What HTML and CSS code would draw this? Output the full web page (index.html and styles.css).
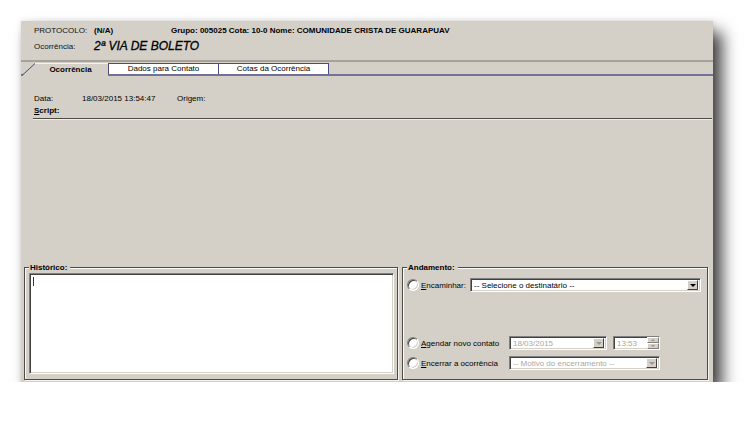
FILE: index.html
```html
<!DOCTYPE html>
<html lang="pt-BR">
<head>
  <meta charset="UTF-8">
  <title>Ocorrência</title>
  <link rel="stylesheet" href="styles.css">
</head>
<body>

<div class="window">

  <!-- cabeçalho -->
  <div class="header">
    <div class="hrow">
      <span class="hlabel">PROTOCOLO:</span>
      <span class="proto">(N/A)</span>
      <span class="grupo">Grupo: 005025 Cota: 10-0 Nome: COMUNIDADE CRISTA DE GUARAPUAV</span>
    </div>
    <div class="hrow hrow-title">
      <span class="hlabel">Ocorrência:</span>
      <span class="titulo">2ª VIA DE BOLETO</span>
    </div>
  </div>
  <div class="hsep"></div>

  <!-- abas -->
  <div class="tabs">
    <svg class="tab-slant" width="13" height="13" viewBox="0 0 13 13">
      <polygon points="0,13 13,0 13,13" fill="#d4d0c8"/>
      <line x1="0" y1="12.5" x2="13" y2="0.5" stroke="#4a4a80" stroke-width="1"/>
    </svg>
    <div class="tab tab-active">Ocorrência</div>
    <div class="tab tab-dados">Dados para Contato</div>
    <div class="tab tab-cotas">Cotas da Ocorrência</div>
  </div>

  <div class="content">
    <div class="info-row">
      <span class="info-label">Data:</span>
      <span class="info-date">18/03/2015 13:54:47</span>
      <span>Origem:</span>
    </div>
    <div class="script-row"><u>S</u>cript:</div>
    <div class="script-line"></div>
  </div>

  <div class="bottom">
    <fieldset class="group group-hist">
      <legend>Histórico:</legend>
      <div class="memo"><span class="caret"></span></div>
    </fieldset>

    <fieldset class="group group-and">
      <legend>Andamento:</legend>
      <div class="opt">
        <span class="radio"></span>
        <span class="opt-label opt-enc"><u>E</u>ncaminhar:</span>
        <div class="combo combo-dest">
          <span class="combo-val">-- Selecione o destinatário --</span>
          <span class="combo-btn"><i class="arrow"></i></span>
        </div>
      </div>
      <div class="opt opt-agendar">
        <span class="radio"></span>
        <span class="opt-label"><u>A</u>gendar novo contato</span>
        <div class="combo combo-date disabled">
          <span class="combo-val">18/03/2015</span>
          <span class="combo-btn"><i class="arrow"></i></span>
        </div>
        <div class="combo combo-time disabled">
          <span class="combo-val">13:53</span>
          <span class="spin">
            <span class="spin-btn"><i class="arrow-up"></i></span>
            <span class="spin-btn"><i class="arrow"></i></span>
          </span>
        </div>
      </div>
      <div class="opt">
        <span class="radio"></span>
        <span class="opt-label"><u>E</u>ncerrar a ocorrência</span>
        <div class="combo combo-motivo disabled">
          <span class="combo-val">-- Motivo do encerramento --</span>
          <span class="combo-btn"><i class="arrow"></i></span>
        </div>
      </div>
    </fieldset>
  </div>

</div>

</body>
</html>
```

FILE: styles.css
```css
body {
  margin: 0;
  background: #fff;
  font-family: "Liberation Sans", Arial, sans-serif;
  font-size: 8px;
  color: #000;
}

.window {
  width: 692px;
  height: 361px;
  margin: 21px 0 0 21px;
  background: #d4d0c8;
  box-shadow: 9px 11px 15px rgba(0, 0, 0, 0.75), 0 0 5px rgba(0, 0, 0, 0.12);
  display: flex;
  flex-direction: column;
}

/* cabeçalho */
.header {
  height: 39px;
  padding: 4px 0 0 13px;
  box-sizing: border-box;
}

.hrow {
  display: flex;
  align-items: center;
  height: 11px;
  white-space: nowrap;
}

.hrow-title {
  height: 16px;
  margin-top: 2px;
}

.hlabel {
  width: 60px;
  color: #111;
}

.proto {
  width: 77px;
  font-weight: bold;
}

.grupo {
  font-weight: bold;
}

.titulo {
  font-size: 12px;
  font-style: italic;
  -webkit-text-stroke: 0.3px #000;
}

.hsep {
  height: 2px;
  background: #a6a29a;
}

/* abas */
.tabs {
  display: flex;
  align-items: flex-end;
  height: 12px;
  padding-left: 1px;
  border-bottom: 2px solid #727199;
}

.tab-slant {
  display: block;
  margin-bottom: -2px;
}

.tab {
  height: 11px;
  line-height: 10px;
  box-sizing: border-box;
  text-align: center;
  background: #fff;
  border: 1px solid #4a4a80;
  border-bottom: none;
}

.tab-active {
  width: 73px;
  height: 13px;
  margin-bottom: -2px;
  line-height: 11px;
  font-weight: bold;
  background: #d4d0c8;
  border: none;
  border-top: 1px solid #f4f3f0;
  padding-right: 2px;
}

.tab-dados {
  width: 111px;
}

.tab-cotas {
  width: 111px;
  margin-left: -1px;
}

/* dados */
.content {
  padding: 18px 1px 0 12px;
}

.info-row {
  display: flex;
  height: 10px;
  line-height: 10px;
  padding-left: 1px;
}

.info-label {
  width: 48px;
}

.info-date {
  width: 95px;
}

.script-row {
  height: 10px;
  line-height: 10px;
  margin-top: 2px;
  padding-left: 1px;
  font-weight: bold;
}

.script-line {
  margin-top: 2px;
  border-top: 1px solid #4f4c47;
  border-bottom: 1px solid #efeeea;
}

/* grupos */
.bottom {
  display: flex;
  gap: 4px;
  margin-top: auto;
  height: 119px;
  padding: 0 5px 2px 3px;
  box-sizing: border-box;
}

.group {
  margin: 0;
  min-width: 0;
  height: 100%;
  box-sizing: border-box;
  border: 1px solid #4d4b47;
  box-shadow: inset 1px 1px 0 #fbfbfa, 1px 1px 0 #f4f3f0;
  display: flex;
  flex-direction: column;
}

.group legend {
  padding: 0 3px 0 1px;
  margin-left: 0;
  line-height: 9px;
  font-weight: bold;
  background: #d4d0c8;
}

.group-hist {
  flex: 0 0 374px;
  padding: 1px 3px 5px 4px;
}

.group-and {
  flex: 1;
  padding: 6px 6px 9px 4px;
}

.memo {
  flex: 1;
  background: #fff;
  border: 1px solid;
  border-color: #808080 #fff #fff #808080;
  box-shadow: inset 1px 1px 0 #404040, inset -1px -1px 0 #d4d0c8;
}

.caret {
  display: block;
  width: 1px;
  height: 9px;
  margin: 3px 0 0 3px;
  background: #333;
}

/* opções */
.opt {
  display: flex;
  align-items: center;
  height: 14px;
}

.opt-agendar {
  margin-top: auto;
  margin-bottom: 6px;
}

.radio {
  width: 12px;
  height: 12px;
  box-sizing: border-box;
  border-radius: 50%;
  background: #fff;
  border: 1px solid;
  border-color: #808080 #fff #fff #808080;
  box-shadow: inset 1px 1px 0 #404040, inset -1px -1px 0 #d4d0c8;
  margin-right: 2px;
}

.opt-label {
  width: 88px;
  white-space: nowrap;
}

.opt-enc {
  width: 49px;
}

.combo {
  display: flex;
  align-items: center;
  height: 14px;
  box-sizing: border-box;
  background: #fff;
  border: 1px solid;
  border-color: #808080 #fff #fff #808080;
  box-shadow: inset 1px 1px 0 #404040, inset -1px -1px 0 #d4d0c8;
  padding: 1px 2px 1px 1px;
  white-space: nowrap;
}

.combo-val {
  flex: 1;
  padding-left: 2px;
  overflow: hidden;
}

.combo-dest {
  width: 231px;
}

.combo-date {
  width: 98px;
}

.combo-time {
  width: 47px;
  margin-left: 6px;
}

.combo-motivo {
  width: 151px;
}

.disabled .combo-val {
  color: #a9a8a4;
}

.combo-btn {
  width: 11px;
  height: 10px;
  box-sizing: border-box;
  background: #d4d0c8;
  border: 1px solid;
  border-color: #fff #404040 #404040 #fff;
  display: flex;
  align-items: center;
  justify-content: center;
}

.arrow {
  width: 0;
  height: 0;
  border-left: 3px solid transparent;
  border-right: 3px solid transparent;
  border-top: 3px solid #000;
}

.arrow-up {
  width: 0;
  height: 0;
  border-left: 2px solid transparent;
  border-right: 2px solid transparent;
  border-bottom: 2px solid #9a9893;
}

.disabled .arrow {
  border-top-color: #9a9893;
}

.spin {
  display: flex;
  flex-direction: column;
  width: 12px;
  height: 12px;
  margin: -1px -2px -1px 0;
}

.spin-btn {
  flex: 1;
  background: #d4d0c8;
  border: 1px solid;
  border-color: #fff #808080 #808080 #fff;
  display: flex;
  align-items: center;
  justify-content: center;
}

.spin-btn .arrow {
  border-left-width: 2px;
  border-right-width: 2px;
  border-top-width: 2px;
}
```
